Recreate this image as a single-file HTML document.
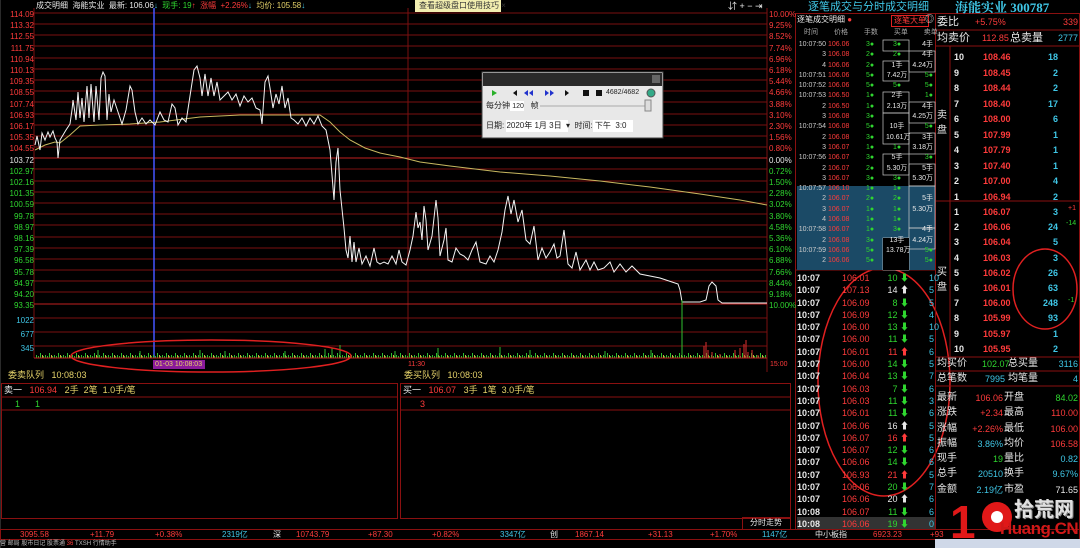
<!DOCTYPE html>
<html><head><meta charset="utf-8"><style>
*{margin:0;padding:0;box-sizing:border-box}
body{width:1080px;height:548px;background:#000;overflow:hidden;position:relative;font-family:"Liberation Sans","Noto Sans CJK SC",sans-serif;font-size:9px;color:#ddd}
.a{position:absolute;white-space:nowrap;line-height:1}
.r{color:#ff3b3b}.g{color:#2fd62f}.c{color:#3fc6e6}.w{color:#e8e8e8}.y{color:#e6d36a}
.ra{text-align:right}
</style></head><body>
<svg class="a" style="left:0;top:0" width="1080" height="548">
<defs>
<pattern id="vp" width="9" height="6" patternUnits="userSpaceOnUse" y="352">
<rect x="0" y="3" width="1" height="3" fill="#2fbf2f"/><rect x="2" y="4" width="1" height="2" fill="#2fbf2f"/><rect x="4" y="1" width="1" height="5" fill="#2fbf2f"/><rect x="6" y="3" width="1" height="3" fill="#c8b040"/><rect x="7" y="4" width="1" height="2" fill="#2fbf2f"/>
</pattern>
</defs>
<!-- grid -->
<g stroke="#7a1010" stroke-width="1">
<line x1="34" x2="767" y1="13" y2="13"/><line x1="34" x2="767" y1="24" y2="24"/><line x1="34" x2="767" y1="35" y2="35"/><line x1="34" x2="767" y1="46" y2="46"/><line x1="34" x2="767" y1="58" y2="58"/><line x1="34" x2="767" y1="69" y2="69"/><line x1="34" x2="767" y1="80" y2="80"/><line x1="34" x2="767" y1="91" y2="91"/><line x1="34" x2="767" y1="102" y2="102"/><line x1="34" x2="767" y1="114" y2="114"/><line x1="34" x2="767" y1="125" y2="125"/><line x1="34" x2="767" y1="136" y2="136"/><line x1="34" x2="767" y1="147" y2="147"/>
<line x1="34" x2="767" y1="169" y2="169"/><line x1="34" x2="767" y1="181" y2="181"/><line x1="34" x2="767" y1="192" y2="192"/><line x1="34" x2="767" y1="203" y2="203"/><line x1="34" x2="767" y1="214" y2="214"/><line x1="34" x2="767" y1="225" y2="225"/><line x1="34" x2="767" y1="237" y2="237"/><line x1="34" x2="767" y1="248" y2="248"/><line x1="34" x2="767" y1="259" y2="259"/><line x1="34" x2="767" y1="270" y2="270"/><line x1="34" x2="767" y1="281" y2="281"/><line x1="34" x2="767" y1="292" y2="292"/>
<line x1="34" x2="767" y1="318" y2="318"/><line x1="34" x2="767" y1="332" y2="332"/><line x1="34" x2="767" y1="346" y2="346"/>
<line x1="34" x2="34" y1="8" y2="358"/><line x1="408" x2="408" y1="8" y2="358"/><line x1="767" x2="767" y1="8" y2="372"/>
</g>
<line x1="34" x2="767" y1="158" y2="158" stroke="#c02020"/>
<line x1="34" x2="767" y1="304" y2="304" stroke="#c02020"/>
<line x1="0" x2="0" y1="0" y2="548" stroke="#555" />
<line x1="154" x2="154" y1="8" y2="358" stroke="#4455ff" stroke-width="1.5"/>
<polyline fill="none" stroke="#c8b860" stroke-width="1" points="35,150 45,145 55,142 60,143 70,135 80,126 100,125 130,124 160,122 200,117 240,115 270,115 320,115 330,122 340,132 350,140 365,148 380,153 400,157 420,162 450,166 500,172 550,176 600,181 650,187 700,194 740,200 767,205"/>
<polyline fill="none" stroke="#f4f4f4" stroke-width="1" points="35,145 37,136 40,150 42,133 45,140 48,132 50,137 53,131 55,138 57,142 58,158 60,140 63,135 66,130 70,124 72,110 73,100 76,120 78,92 80,118 82,98 84,122 87,86 89,118 91,84 94,122 96,86 99,120 101,78 103,72 105,76 107,120 109,94 111,112 114,100 118,112 122,124 126,110 130,86 132,90 135,112 138,124 142,118 146,124 150,120 155,125 160,112 164,120 168,122 172,104 175,108 178,125 182,118 186,122 190,96 194,70 197,66 200,78 202,96 205,74 208,96 211,78 214,96 217,82 220,100 224,96 228,92 232,100 236,94 240,106 244,96 248,102 252,98 256,108 260,110 262,124 265,82 268,76 270,88 273,108 276,94 279,104 282,86 285,108 288,98 291,118 294,120 298,124 302,118 306,126 310,118 314,124 318,116 322,126 326,130 330,150 334,200 336,162 338,148 340,190 344,228 346,250 348,258 350,236 352,262 354,242 356,262 359,248 362,264 366,256 370,266 374,248 377,262 380,264 384,262 388,264 392,256 396,264 399,250 402,262 406,265 410,250 413,236 416,212 418,228 420,222 422,240 424,206 426,220 428,250 432,236 436,200 438,218 440,256 444,240 446,228 448,260 452,262 456,248 460,254 464,256 468,260 472,250 476,242 480,262 486,264 490,256 494,262 498,250 502,232 505,210 508,196 511,214 514,200 518,222 522,210 526,240 530,244 534,226 538,260 542,248 546,258 550,252 554,244 557,258 560,256 564,230 568,264 572,268 576,252 580,270 586,260 590,270 594,262 598,270 604,268 610,262 614,272 620,264 626,272 632,266 640,274 650,276 660,278 672,282 678,284 680,290 682,302 700,302 706,300 709,286 712,282 716,286 718,300 722,303 767,303"/>
<!-- volume -->
<rect x="35" y="352" width="732" height="6" fill="url(#vp)"/>
<path fill="none" stroke="#2fbf2f" stroke-width="1" d="M98,358L98,350 M140,358L140,351 M200,358L200,350 M225,358L225,351 M285,358L285,351 M325,358L325,349 M332,358L332,348 M340,358L340,345 M395,358L395,351 M438,358L438,348 M500,358L500,347 M530,358L530,350 M605,358L605,351 M651,358L651,350 M682,358L682,300"/>
<path fill="none" stroke="#e03030" stroke-width="1" d="M704,358L704,346 M706,358L706,342 M708,358L708,350 M712,358L712,352 M720,358L720,354 M735,358L735,350 M740,358L740,348 M744,358L744,344 M746,358L746,340 M748,358L748,352 M752,358L752,350 M758,358L758,355"/>
<line x1="34" x2="767" y1="358" y2="358" stroke="#c02020"/>
<rect x="153" y="360" width="52" height="9" fill="#8a1a9a"/>
<ellipse cx="211" cy="356" rx="140" ry="16" fill="none" stroke="#e02020" stroke-width="1.5"/>
<ellipse cx="884" cy="382" rx="66" ry="114" fill="none" stroke="#e02020" stroke-width="1.5"/>
<ellipse cx="1045" cy="289" rx="32" ry="40" fill="none" stroke="#e02020" stroke-width="1.5"/>
<g stroke="#8a1010" fill="none">
<rect x="1.5" y="383.5" width="396" height="135"/><rect x="400.5" y="383.5" width="390" height="135"/>
<line x1="1" x2="397" y1="397" y2="397"/><line x1="1" x2="397" y1="410" y2="410"/>
<line x1="400" x2="790" y1="397" y2="397"/><line x1="400" x2="790" y1="410" y2="410"/>
<rect x="742.5" y="517.5" width="48" height="12"/>
<rect x="0.5" y="529.5" width="1079" height="10"/>
<rect x="795.5" y="13.5" width="140" height="516"/>
<line x1="795" x2="935" y1="270" y2="270"/>
<rect x="935.5" y="13.5" width="144" height="516"/>
<line x1="935" x2="1080" y1="30" y2="30"/><line x1="935" x2="1080" y1="46" y2="46"/>
<line x1="935" x2="1080" y1="201" y2="201"/><line x1="935" x2="1080" y1="357" y2="357"/>
<line x1="935" x2="1080" y1="371" y2="371"/><line x1="935" x2="1080" y1="386" y2="386"/>
<line x1="950" x2="950" y1="46" y2="357"/>
</g>
<rect x="797" y="186" width="138" height="84" fill="#1b4a66"/>
<rect x="797" y="517" width="138" height="12" fill="#333"/>
<g stroke="#ccc" fill="none" stroke-width="0.7">
<rect x="883" y="40" width="26" height="11"/><rect x="883" y="61" width="26" height="20"/><rect x="909" y="51" width="26" height="21"/>
<rect x="883" y="92" width="26" height="21"/><rect x="909" y="102" width="26" height="21"/><rect x="883" y="113" width="26" height="31"/>
<rect x="909" y="133" width="26" height="21"/><rect x="883" y="154" width="26" height="21"/><rect x="909" y="164" width="26" height="22"/>
<rect x="909" y="186" width="26" height="42"/><rect x="909" y="228" width="26" height="21"/><rect x="883" y="238" width="26" height="32" />
</g>
<rect x="883" y="238" width="26" height="32" fill="#000"/>
<!-- dialog -->
<rect x="482" y="72" width="181" height="66" fill="#e8e8e8" stroke="#444"/>
<rect x="483" y="73" width="179" height="13" fill="#2a2a2a"/>
<rect x="652" y="75" width="8" height="8" fill="#666"/>
<polygon points="492,90 492,96 497,93" fill="#29b029"/>
<polygon points="513,93 517,90 517,96" fill="#111"/>
<polygon points="524,93 528,90 528,96" fill="#2233cc"/><polygon points="529,93 533,90 533,96" fill="#2233cc"/>
<polygon points="545,90 549,93 545,96" fill="#2233cc"/><polygon points="550,90 554,93 550,96" fill="#2233cc"/>
<polygon points="565,90 569,93 565,96" fill="#111"/>
<rect x="583" y="90" width="6" height="6" fill="#111"/><rect x="596" y="90" width="6" height="6" fill="#111"/>
<circle cx="651" cy="93" r="4" fill="#3a8" stroke="#555"/>
<line x1="540" x2="648" y1="106" y2="106" stroke="#aaa"/>
<rect x="645" y="100" width="6" height="11" fill="#ddd" stroke="#888"/>
<rect x="510" y="101" width="14" height="10" fill="#fff"/>
<rect x="506" y="120" width="62" height="12" fill="#fff"/><rect x="593" y="120" width="40" height="12" fill="#fff"/>
<!-- watermark -->
<text x="950" y="538" font-family="Liberation Sans" font-weight="bold" font-size="46" fill="#e01818">1</text>
<circle cx="997" cy="517" r="15" fill="#e01818"/><circle cx="997" cy="517" r="6" fill="#fff"/>
<rect x="935" y="539" width="145" height="9" fill="#cfd8e8"/>
</svg>

<div class="a w" style="left:36px;top:2px;font-size:8px">成交明细 &nbsp;海能实业 &nbsp;最新: 106.06<span class="c">↓</span> <span class="g">&nbsp;现手: 19</span><span class="r">↑ &nbsp;涨幅 &nbsp;+2.26%</span><span class="c">↓</span> <span class="y">&nbsp;均价: 105.58</span><span class="c">↓</span></div>
<div class="a" style="left:415px;top:0;width:86px;height:12px;background:#f2eeb0;color:#333;font-size:8px;padding:2px 4px">查看超级盘口使用技巧 ×</div>
<div class="a w" style="left:728px;top:2px;font-size:9px">⇵ + − ⇥</div>
<div class="a r" style="left:2px;top:9px;font-size:8px;line-height:11.2px;width:32px;text-align:right">114.09<br>113.32<br>112.55<br>111.75<br>110.94<br>110.13<br>109.35<br>108.55<br>107.74<br>106.93<br>106.17<br>105.35<br>104.55<br><span class="w">103.72</span><br><span class="g">102.97<br>102.16<br>101.35<br>100.59<br>99.78<br>98.97<br>98.16<br>97.39<br>96.58<br>95.78<br>94.97<br>94.20<br>93.35</span></div>
<div class="a c" style="left:2px;top:314px;font-size:8px;line-height:14px;width:32px;text-align:right">1022<br>677<br>345</div>
<div class="a r" style="left:769px;top:9px;font-size:8px;line-height:11.2px">10.00%<br>9.25%<br>8.52%<br>7.74%<br>6.96%<br>6.18%<br>5.44%<br>4.66%<br>3.88%<br>3.10%<br>2.30%<br>1.56%<br>0.80%<br><span class="w">0.00%</span><br><span class="g">0.72%<br>1.50%<br>2.28%<br>3.02%<br>3.80%<br>4.58%<br>5.36%<br>6.10%<br>6.88%<br>7.66%<br>8.44%<br>9.18%<br>10.00%</span></div>
<div class="a y" style="left:155px;top:361px;font-size:7px">01-03 10:08:03</div>
<div class="a r" style="left:408px;top:361px;font-size:7px">11:30</div>
<div class="a r" style="left:770px;top:361px;font-size:7px">15:00</div>
<div class="a" style="left:606px;top:89px;font-size:7px;color:#222">4682/4682</div>
<div class="a" style="left:486px;top:102px;font-size:8px;color:#222">每分钟 <span style="font-size:7px">120</span> &nbsp;&nbsp;帧</div>
<div class="a" style="left:486px;top:122px;font-size:8px;color:#222">日期: 2020年 1月 3日 &nbsp;▾ &nbsp;时间: 下午 &nbsp;3:0</div>
<div class="a y" style="left:8px;top:371px;font-size:9px">委卖队列 &nbsp;&nbsp;10:08:03</div>
<div class="a y" style="left:404px;top:371px;font-size:9px">委买队列 &nbsp;&nbsp;10:08:03</div>
<div class="a" style="left:4px;top:386px;font-size:9px"><span class="w">卖一</span> &nbsp;&nbsp;<span class="r">106.94</span> &nbsp;&nbsp;<span class="y">2手 &nbsp;2笔 &nbsp;1.0手/笔</span></div>
<div class="a" style="left:403px;top:386px;font-size:9px"><span class="w">买一</span> &nbsp;&nbsp;<span class="r">106.07</span> &nbsp;&nbsp;<span class="y">3手 &nbsp;1笔 &nbsp;3.0手/笔</span></div>
<div class="a g" style="left:15px;top:400px;font-size:9px">1 &nbsp;&nbsp;&nbsp;&nbsp;&nbsp;1</div>
<div class="a r" style="left:420px;top:400px;font-size:9px">3</div>
<div class="a w" style="left:750px;top:519px;font-size:8px">分时走势</div>
<div class="a" style="left:0;top:531px;font-size:8px;width:1080px">
<span class="a r" style="left:20px">3095.58</span><span class="a r" style="left:90px">+11.79</span><span class="a r" style="left:155px">+0.38%</span><span class="a c" style="left:222px">2319亿</span><span class="a w" style="left:273px">深</span><span class="a r" style="left:296px">10743.79</span><span class="a r" style="left:368px">+87.30</span><span class="a r" style="left:432px">+0.82%</span><span class="a c" style="left:500px">3347亿</span><span class="a w" style="left:550px">创</span><span class="a r" style="left:575px">1867.14</span><span class="a r" style="left:648px">+31.13</span><span class="a r" style="left:710px">+1.70%</span><span class="a c" style="left:762px">1147亿</span><span class="a w" style="left:815px">中小板指</span><span class="a r" style="left:873px">6923.23</span><span class="a r" style="left:930px">+93</span></div>
<div class="a" style="left:0;top:541px;font-size:6px;color:#bbb">营 邮局 股市日记 股票通 <span class="r">36</span> TXSH 行情助手</div>
<div class="a c" style="left:808px;top:2px;font-size:11px">逐笔成交与分时成交明细</div>
<div class="a w" style="left:797px;top:16px;font-size:8px">逐笔成交明细 <span class="r">●</span></div>
<div class="a r" style="left:891px;top:15px;font-size:8px;border:1px solid #e02020;padding:1px 2px">逐笔大单</div>
<div class="a w" style="left:925px;top:15px;font-size:9px">◎</div>
<div class="a" style="left:804px;top:29px;font-size:7px;color:#aaa;word-spacing:14px">时间 价格 手数 买单 卖单</div>
<div class="a" style="left:796px;top:40px;font-size:7px;line-height:10.3px;width:30px;text-align:right;color:#ccc">10:07:50<br>3<br>4<br>10:07:51<br>10:07:52<br>10:07:53<br>2<br>3<br>10:07:54<br>2<br>3<br>10:07:56<br>2<br>3<br>10:07:57<br>2<br>3<br>4<br>10:07:58<br>2<br>10:07:59<br>2</div>
<div class="a r" style="left:828px;top:40px;font-size:7px;line-height:10.3px">106.06<br>106.08<br>106.06<br>106.06<br>106.06<br>106.50<br>106.50<br>106.08<br>106.08<br>106.08<br>106.07<br>106.07<br>106.07<br>106.07<br>106.10<br>106.07<br>106.07<br>106.08<br>106.07<br>106.08<br>106.06<br>106.06</div>
<div class="a g" style="left:866px;top:40px;font-size:7px;line-height:10.3px">3●<br>2●<br>2●<br>5●<br>5●<br>1●<br>1●<br>3●<br>5●<br>3●<br>1●<br>3●<br>2●<br>3●<br>1●<br>2●<br>1●<br>1●<br>1●<br>3●<br>5●<br>5●</div>
<div class="a w" style="left:886px;top:40px;font-size:7px;line-height:10.3px;text-align:center;width:22px"><span class="g">3●<br>2●</span><br>1手<br>7.42万<br><span class="g">5●</span><br>2手<br>2.13万<br><br>10手<br>10.61万<br><span class="g">1●</span><br>5手<br>5.30万<br><span class="g">3●</span><br><span class="g">1●<br>2●<br>1●<br>1●<br>3●</span><br>13手<br>13.78万</div>
<div class="a w" style="left:911px;top:40px;font-size:7px;line-height:10.3px;text-align:right;width:22px">4手<br>4手<br>4.24万<br><span class="g">5●<br>5●<br>1●</span><br>4手<br>4.25万<br><span class="g">5●</span><br>3手<br>3.18万<br><span class="g">3●</span><br>5手<br>5.30万<br><br>5手<br>5.30万<br><br>4手<br>4.24万<br><span class="g">5●<br>5●</span></div>
<div class="a w" style="left:797px;top:272px;font-size:9px;line-height:12.3px;font-weight:bold">10:07<br>10:07<br>10:07<br>10:07<br>10:07<br>10:07<br>10:07<br>10:07<br>10:07<br>10:07<br>10:07<br>10:07<br>10:07<br>10:07<br>10:07<br>10:07<br>10:07<br>10:07<br>10:07<br>10:08<br>10:08</div>
<div class="a r" style="left:842px;top:272px;font-size:9px;line-height:12.3px">106.01<br>107.13<br>106.09<br>106.09<br>106.00<br>106.00<br>106.01<br>106.00<br>106.04<br>106.03<br>106.03<br>106.01<br>106.06<br>106.07<br>106.07<br>106.06<br>106.93<br>106.06<br>106.06<br>106.07<br>106.06</div>
<div class="a g" style="left:883px;top:272px;font-size:9px;line-height:12.3px;width:26px;text-align:right">10 ⬇<br><span class="w">14 ⬆</span><br>8 ⬇<br>12 ⬇<br>13 ⬇<br>11 ⬇<br><span class="r">11 ⬆</span><br>14 ⬇<br>13 ⬇<br>7 ⬇<br>11 ⬇<br>11 ⬇<br><span class="w">16 ⬆</span><br><span class="r">16 ⬆</span><br>12 ⬇<br>14 ⬇<br><span class="r">21 ⬆</span><br>20 ⬇<br><span class="w">20 ⬆</span><br>11 ⬇<br>19 ⬇</div>
<div class="a c" style="left:929px;top:272px;font-size:9px;line-height:12.3px">10<br>5<br>5<br>4<br>10<br>5<br>6<br>5<br>7<br>6<br>3<br>6<br>5<br>5<br>6<br>6<br>5<br>7<br>6<br>6<br>0</div>
<div class="a c" style="left:955px;top:1px;font-size:13px;font-weight:bold;font-family:'Liberation Serif','Noto Serif CJK SC',serif">海能实业 300787</div>
<div class="a w" style="left:937px;top:17px;font-size:11px">委比</div><div class="a r" style="left:975px;top:18px;font-size:9px">+5.75%</div><div class="a r ra" style="left:1040px;top:18px;width:38px;font-size:9px">339</div>
<div class="a w" style="left:937px;top:33px;font-size:11px">均卖价</div><div class="a r" style="left:982px;top:34px;font-size:9px">112.85</div><div class="a w" style="left:1010px;top:33px;font-size:11px">总卖量</div><div class="a c ra" style="left:1040px;top:34px;width:38px;font-size:9px">2777</div>
<div class="a w" style="left:954px;top:50px;font-size:9px;line-height:15.5px;font-weight:bold">10<br>9<br>8<br>7<br>6<br>5<br>4<br>3<br>2<br>1</div>
<div class="a r" style="left:983px;top:50px;font-size:9px;line-height:15.5px;font-weight:bold">108.46<br>108.45<br>108.44<br>108.40<br>108.00<br>107.99<br>107.79<br>107.40<br>107.00<br>106.94</div>
<div class="a c ra" style="left:1030px;top:50px;width:28px;font-size:9px;line-height:15.5px;font-weight:bold">18<br>2<br>2<br>17<br>6<br>1<br>1<br>1<br>4<br>2</div>
<div class="a w" style="left:954px;top:205px;font-size:9px;line-height:15.2px;font-weight:bold">1<br>2<br>3<br>4<br>5<br>6<br>7<br>8<br>9<br>10</div>
<div class="a r" style="left:983px;top:205px;font-size:9px;line-height:15.2px;font-weight:bold">106.07<br>106.06<br>106.04<br>106.03<br>106.02<br>106.01<br>106.00<br>105.99<br>105.97<br>105.95</div>
<div class="a c ra" style="left:1030px;top:205px;width:28px;font-size:9px;line-height:15.2px;font-weight:bold">3<br>24<br>5<br>3<br>26<br>63<br>248<br>93<br>1<br>2</div>
<div class="a r" style="left:1068px;top:205px;font-size:7px">+1</div><div class="a g" style="left:1066px;top:220px;font-size:7px">-14</div><div class="a g" style="left:1068px;top:297px;font-size:7px">-1</div>
<div class="a w" style="left:937px;top:108px;font-size:10px;line-height:15px">卖<br>盘</div>
<div class="a w" style="left:937px;top:265px;font-size:10px;line-height:15px">买<br>盘</div>
<div class="a w" style="left:937px;top:359px;font-size:10px">均买价</div><div class="a g" style="left:982px;top:360px;font-size:9px">102.07</div><div class="a w" style="left:1008px;top:359px;font-size:10px">总买量</div><div class="a c ra" style="left:1040px;top:360px;width:38px;font-size:9px">3116</div>
<div class="a w" style="left:937px;top:374px;font-size:10px">总笔数</div><div class="a c" style="left:985px;top:375px;font-size:9px">7995</div><div class="a w" style="left:1008px;top:374px;font-size:10px">均笔量</div><div class="a c ra" style="left:1040px;top:375px;width:38px;font-size:9px">4</div>
<div class="a w" style="left:937px;top:390px;font-size:10px;line-height:15.3px">最新<br>涨跌<br>涨幅<br>振幅<br>现手<br>总手<br>金额</div>
<div class="a ra" style="left:960px;top:391px;width:43px;font-size:9px;line-height:15.3px"><span class="r">106.06</span><br><span class="r">+2.34</span><br><span class="r">+2.26%</span><br><span class="c">3.86%</span><br><span class="g">19</span><br><span class="c">20510</span><br><span class="c">2.19亿</span></div>
<div class="a w" style="left:1004px;top:390px;font-size:10px;line-height:15.3px">开盘<br>最高<br>最低<br>均价<br>量比<br>换手<br>市盈</div>
<div class="a ra" style="left:1030px;top:391px;width:48px;font-size:9px;line-height:15.3px"><span class="g">84.02</span><br><span class="r">110.00</span><br><span class="r">106.00</span><br><span class="r">106.58</span><br><span class="c">0.82</span><br><span class="c">9.67%</span><br><span class="w">71.65</span></div>
<div class="a" style="left:1014px;top:500px;font-size:20px;color:#e0e0e0;font-weight:bold;text-shadow:1px 1px 0 #888">拾荒网</div>
<div class="a" style="left:1000px;top:520px;font-size:17px;color:#d01818;font-weight:bold;letter-spacing:-0.5px">Huang.CN</div>
</body></html>
